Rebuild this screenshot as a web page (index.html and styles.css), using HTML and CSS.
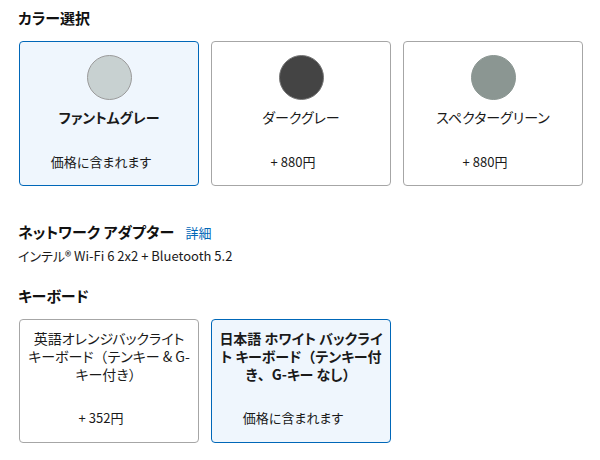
FILE: index.html
```html
<!DOCTYPE html>
<html lang="ja">
<head>
<meta charset="utf-8">
<link rel="stylesheet" href="styles.css">
</head>
<body>
<main class="page">
  <section class="section">
    <h2 class="heading">カラー選択</h2>
    <div class="options">
      <div class="option selected">
        <span class="swatch swatch-phantom"></span>
        <div class="name">ファントムグレー</div>
        <div class="price">価格に含まれます</div>
      </div>
      <div class="option">
        <span class="swatch swatch-dark"></span>
        <div class="name">ダークグレー</div>
        <div class="price">+ 880円</div>
      </div>
      <div class="option">
        <span class="swatch swatch-green"></span>
        <div class="name">スペクターグリーン</div>
        <div class="price">+ 880円</div>
      </div>
    </div>
  </section>

  <section class="section network">
    <h2 class="heading">ネットワーク アダプター <a class="link" href="#">詳細</a></h2>
    <p class="spec">インテル® Wi-Fi 6 2x2 + Bluetooth 5.2</p>
  </section>

  <section class="section">
    <h2 class="heading">キーボード</h2>
    <div class="options kb">
      <div class="option kb-option">
        <div class="name">英語オレンジバックライト キーボード<span class="fw">（</span>テンキー &amp; G-キー付き<span class="fw">）</span></div>
        <div class="price">+ 352円</div>
      </div>
      <div class="option kb-option selected">
        <div class="name">日本語 ホワイト バックライト キーボード<span class="fw">（</span>テンキー付き<span class="fw">、</span>G-キー なし<span class="fw">）</span></div>
        <div class="price">価格に含まれます</div>
      </div>
    </div>
  </section>
</main>
</body>
</html>
```

FILE: styles.css
```css
* { box-sizing: border-box; }
body {
  margin: 0;
  background: #fff;
  color: #1a1a1a;
  font-family: "Noto Sans CJK JP", "Noto Sans", sans-serif;
  font-feature-settings: "palt";
}
.page {
  padding: 6px 18px 0 18px;
}
.heading {
  margin: 0;
  font-size: 15px;
  font-weight: 700;
  line-height: 24px;
  color: #111;
}
.link {
  font-size: 13px;
  font-weight: 400;
  color: #0067b8;
  text-decoration: none;
  margin-left: 8px;
}
.options {
  display: grid;
  grid-template-columns: repeat(3, 180px);
  column-gap: 12px;
  margin-top: 11px;
  padding-left: 1px;
}
.option {
  border: 1px solid #a6a6a6;
  border-radius: 4px;
  height: 145px;
  padding: 13px 10px 0 10px;
  display: flex;
  flex-direction: column;
  align-items: center;
  background: #fff;
}
.option.selected {
  border-color: #0067b8;
  background: #eff6fd;
}
.swatch {
  width: 45px;
  height: 45px;
  border-radius: 50%;
  display: block;
  border: 1px solid #9a9a9a;
}
.swatch-phantom { background: #c8d1d1; }
.swatch-dark { background: #444444; border-color: #777; }
.swatch-green { background: #8b9692; border-color: #8b9692; }
.name {
  font-size: 14px;
  line-height: 18px;
  margin-top: 8px;
  text-align: center;
}
.fw { font-feature-settings: normal; }
.selected .name { font-weight: 700; }
.price {
  font-size: 13px;
  line-height: 18px;
  margin-top: 27px;
  padding-right: 16px;
  text-align: center;
}
.network {
  margin-top: 34px;
}
.spec {
  margin: 2px 0 0 0;
  font-size: 13px;
  line-height: 18px;
}
.network + .section {
  margin-top: 19px;
}
.kb {
  margin-top: 11px;
}
.kb-option {
  height: 124px;
  padding: 9px 7px 0 7px;
}
.kb-option .name {
  margin-top: 0;
}
.kb-option .price {
  margin-top: auto;
  margin-bottom: 15px;
}
```
